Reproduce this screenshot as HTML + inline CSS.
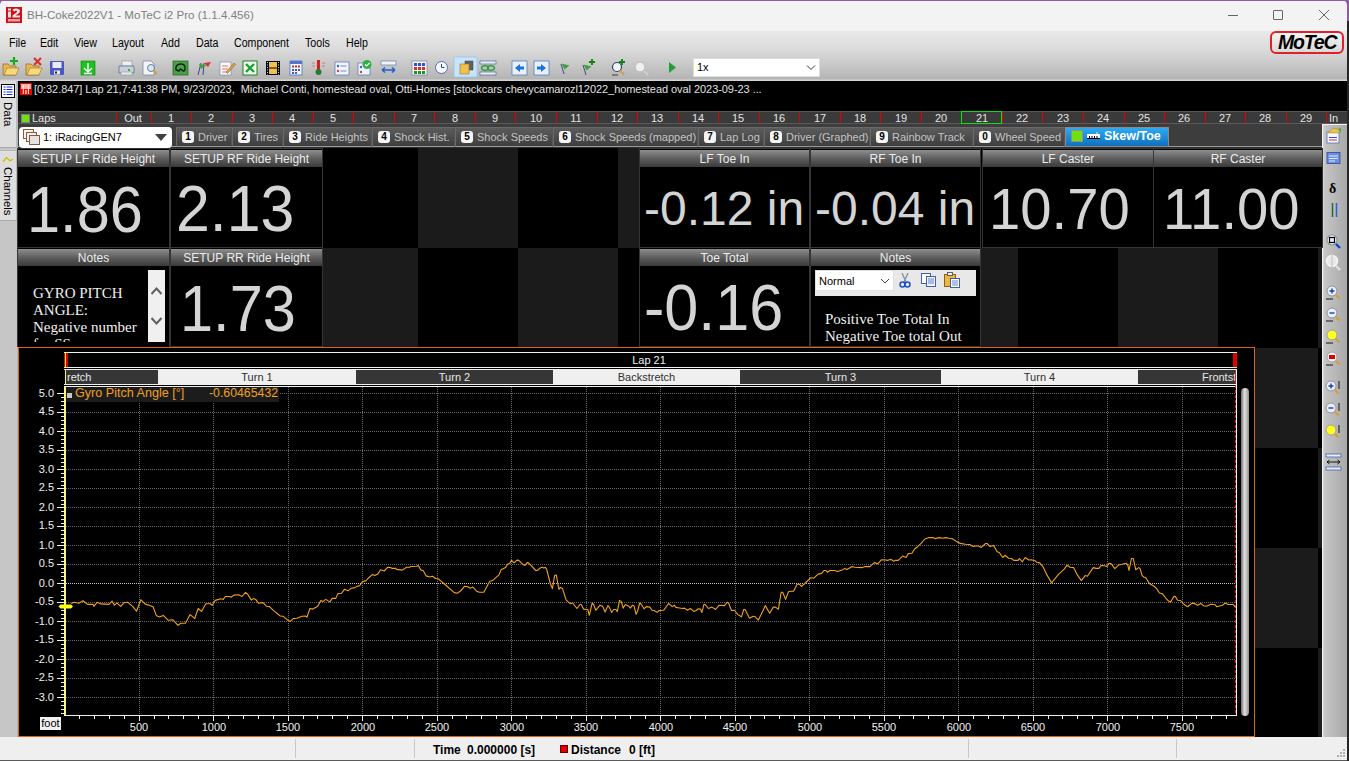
<!DOCTYPE html>
<html><head><meta charset="utf-8">
<style>
*{margin:0;padding:0;box-sizing:border-box}
html,body{width:1349px;height:761px;overflow:hidden;background:#262626;font-family:"Liberation Sans",sans-serif}
.a{position:absolute}
#win{position:absolute;left:0;top:0;width:1347px;height:761px;background:#f3f3f3;overflow:hidden;border-top-left-radius:5px;border-top-right-radius:5px}
.t{position:absolute;white-space:nowrap}
.mn{top:36px;font-size:12.5px;color:#000;transform:scaleX(0.85);transform-origin:0 0}
.lp{top:112px;font-size:11px;color:#e4e4e4;line-height:13px}
.tab{top:127px;height:20px;background:linear-gradient(#5c5c5c,#3e3e3e);border:1px solid #6a6a6a;border-right-color:#555;border-bottom-color:#999}
.badge{top:131px;width:12px;height:12px;background:#f4f4f4;color:#000;font-size:10px;font-weight:bold;line-height:12px;text-align:center;border-radius:3px}
.tabt{top:131px;font-size:11px;color:#c4c4c4}
.hd{height:17px;background:linear-gradient(#8e8e8e,#5a5a5a 55%,#3a3a3a);color:#ececec;font-size:12px;line-height:18px;text-align:center;white-space:nowrap;overflow:hidden}
.val{color:#d4d4d4;line-height:1}
.sec{top:370px;height:14px;font-size:11px;line-height:14px;overflow:hidden;white-space:nowrap}
.ylab{width:40px;text-align:right;font-size:11px;color:#f0f0f0;line-height:14px}
.xlab{width:60px;text-align:center;font-size:11px;color:#f0f0f0;line-height:14px}
</style></head><body>
<div class="a" style="left:0;top:0;width:1349px;height:761px;background:#262626"></div>
<div class="a" style="left:0;top:0;width:1349px;height:21px;background:#8e5aa0"></div>
<div id="win">
  <!-- title bar -->
  <svg class="a" style="left:6px;top:7px" width="16" height="16" viewBox="0 0 16 16">
    <rect x="0" y="0" width="16" height="16" fill="#d01018"/>
    <rect x="2" y="1.5" width="3" height="2" fill="#e8e8e8"/>
    <rect x="2" y="4.5" width="3" height="6" fill="#e0e0e0"/>
    <path d="M6.5 3.5 Q6.5 1.5 10 1.5 Q14 1.5 14 4 Q14 6 11 7.5 L9.5 8.5 H14 V10.5 H6.5 V8.5 L10.5 5.5 Q11.5 4.5 10.5 3.8 Q9 3.3 8.8 4.5 Z" fill="#e4e4e4"/>
    <rect x="2" y="12" width="12" height="2.5" fill="#f0c0c0" opacity="0.8"/>
  </svg>
  <div class="t" style="left:27px;top:8px;font-size:11.6px;color:#808080">BH-Coke2022V1 - MoTeC i2 Pro (1.1.4.456)</div>
  <div class="a" style="left:1228px;top:15px;width:10px;height:1px;background:#666"></div>
  <div class="a" style="left:1273px;top:10px;width:10px;height:10px;border:1px solid #666;border-radius:1px"></div>
  <svg class="a" style="left:1319px;top:10px" width="10" height="10" viewBox="0 0 10 10"><path d="M0 0L10 10M10 0L0 10" stroke="#666" stroke-width="1"/></svg>
  <!-- menu + toolbar gradient -->
  <div class="a" style="left:0;top:31px;width:1347px;height:50px;background:linear-gradient(#e9e9e9 0%,#dcdcdc 35%,#c6c6c6 70%,#b4b4b4 96%,#d4d4d4 98%,#d4d4d4 100%)"></div>
  <div class="t mn" style="left:9px">File</div>
  <div class="t mn" style="left:40px">Edit</div>
  <div class="t mn" style="left:74px">View</div>
  <div class="t mn" style="left:112px">Layout</div>
  <div class="t mn" style="left:161px">Add</div>
  <div class="t mn" style="left:196px">Data</div>
  <div class="t mn" style="left:234px">Component</div>
  <div class="t mn" style="left:305px">Tools</div>
  <div class="t mn" style="left:346px">Help</div>
  <!-- MoTeC logo -->
  <div class="a" style="left:1270px;top:31px;width:74px;height:23px;border:2px solid #e0202a;border-radius:6px;background:linear-gradient(#f4f4f4,#d8d8d8)"></div>
  <div class="t" style="left:1278px;top:31px;font-size:19.5px;font-weight:bold;font-style:italic;color:#000;letter-spacing:-1.2px;transform:scaleY(1.05)">MoTeC</div>
  <!-- toolbar icons -->
  <svg class="a" style="left:0;top:55px" width="700" height="26" viewBox="0 55 700 26">
    <!-- folder + -->
    <path d="M3 64 h5 l2 2 h6 v9 h-13z" fill="#e8b850" stroke="#a07030" stroke-width="0.8"/>
    <path d="M4 75 l3 -7 h12 l-3 7z" fill="#f8d878" stroke="#a07030" stroke-width="0.6"/>
    <path d="M14 57 v8 M10 61 h8" stroke="#10b010" stroke-width="2.2"/>
    <!-- folder x -->
    <path d="M26 64 h5 l2 2 h6 v9 h-13z" fill="#e8b850" stroke="#a07030" stroke-width="0.8"/>
    <path d="M27 75 l3 -7 h12 l-3 7z" fill="#f8d878" stroke="#a07030" stroke-width="0.6"/>
    <path d="M34 58 l7 7 M41 58 l-7 7" stroke="#d83030" stroke-width="2.2"/>
    <!-- floppy -->
    <rect x="50" y="61" width="14" height="14" fill="#4858c8" rx="1"/>
    <rect x="52.5" y="62" width="9" height="6" fill="#e8eef8"/>
    <rect x="54" y="70.5" width="6" height="4" fill="#e8e8e8"/>
    <rect x="55" y="71.5" width="2" height="2" fill="#222"/>
    <!-- green download -->
    <rect x="81" y="61" width="14" height="14" fill="#20c020" stroke="#108010" stroke-width="0.6"/>
    <path d="M88 63 v8 M84 68 l4 4 l4 -4 M84 73.5 h8" stroke="#fff" stroke-width="1.4" fill="none"/>
    <!-- printer -->
    <rect x="122" y="61" width="10" height="5" fill="#f0f0f0" stroke="#8090a0" stroke-width="0.6"/>
    <path d="M119 66 h15 v7 h-15z" fill="#c8d0d8" stroke="#6070a0" stroke-width="0.8"/>
    <rect x="121" y="72" width="11" height="3" fill="#e8e8e8" stroke="#8090a0" stroke-width="0.5"/>
    <rect x="128" y="69" width="2" height="2" fill="#20c020"/>
    <!-- print preview -->
    <path d="M143 61 h8 l3 3 v11 h-11z" fill="#f4f4f8" stroke="#7080a0" stroke-width="0.7"/>
    <circle cx="151" cy="68" r="3.5" fill="#d8e8f0" stroke="#6080a0" stroke-width="1"/>
    <path d="M153.5 70.5 l3.5 3.5" stroke="#d0a040" stroke-width="2"/>
    <!-- green track -->
    <rect x="173" y="61" width="15" height="14" fill="#48a048" stroke="#206020" stroke-width="0.7"/>
    <path d="M176 70 q-1 -6 5 -6 q5 0 4 6 q-1 2 -3 0 q-2 -2 -3 1 z" fill="none" stroke="#102010" stroke-width="1.4"/>
    <!-- flags -->
    <path d="M198 75 l3 -12 M203 75 l1 -12" stroke="#4040a0" stroke-width="1"/>
    <path d="M199 64 l8 1 l-6 4z" fill="#40a040"/>
    <path d="M204 63 l7 -1 l-3 5z" fill="#e03030"/>
    <!-- notepad pencil -->
    <rect x="220" y="62" width="11" height="13" fill="#f8f8f8" stroke="#8090b0" stroke-width="0.7"/>
    <path d="M222 66 h6 M222 69 h6 M222 72 h5" stroke="#e05050" stroke-width="0.8"/>
    <path d="M226 72 l8 -9 l1.5 1.5 l-8 9 z" fill="#e0a040" stroke="#805020" stroke-width="0.5"/>
    <!-- excel -->
    <rect x="243" y="61" width="14" height="14" fill="#f0f8f0" stroke="#208020" stroke-width="1"/>
    <path d="M246 64 l8 8 M254 64 l-8 8" stroke="#20a030" stroke-width="2.4"/>
    <!-- film -->
    <rect x="266" y="61" width="14" height="14" fill="#000"/>
    <rect x="269" y="62" width="8" height="5.5" fill="#f0c050"/>
    <rect x="269" y="68.5" width="8" height="5.5" fill="#f0c050"/>
    <path d="M267.5 62v13M278.5 62v13" stroke="#e0e0e0" stroke-width="1" stroke-dasharray="1 1.5"/>
    <!-- calendar -->
    <rect x="290" y="61" width="12" height="14" fill="#f0f4ff" stroke="#5070c0" stroke-width="0.8"/>
    <rect x="290" y="61" width="12" height="3" fill="#5078d0"/>
    <g fill="#d03030"><rect x="292" y="65.5" width="2" height="2"/><rect x="295" y="65.5" width="2" height="2"/><rect x="298" y="65.5" width="2" height="2"/></g>
    <g fill="#4060c0"><rect x="292" y="69" width="2" height="2"/><rect x="295" y="69" width="2" height="2"/><rect x="298" y="69" width="2" height="2"/><rect x="292" y="72" width="2" height="2"/><rect x="295" y="72" width="2" height="2"/></g>
    <!-- thermometer -->
    <rect x="317" y="60" width="3" height="10" fill="#d02020"/>
    <circle cx="318.5" cy="72" r="3" fill="#208030"/>
    <path d="M312 63 h3 M322 63 h3 M312 66 h3 M322 66 h3" stroke="#f06060" stroke-width="0.8"/>
    <!-- list -->
    <rect x="335" y="62" width="14" height="13" fill="#f0f4ff" stroke="#6080c0" stroke-width="0.8"/>
    <circle cx="338" cy="66" r="1.2" fill="#4060d0"/><circle cx="338" cy="71" r="1.2" fill="#d04040"/>
    <path d="M340.5 66 h6 M340.5 71 h6" stroke="#6070a0" stroke-width="0.8"/>
    <!-- list check -->
    <rect x="358" y="63" width="12" height="12" fill="#f0f4ff" stroke="#6080c0" stroke-width="0.8"/>
    <circle cx="361" cy="67" r="1.2" fill="#4060d0"/><circle cx="361" cy="72" r="1.2" fill="#d04040"/>
    <circle cx="367" cy="64.5" r="4.5" fill="#30b040"/>
    <path d="M365 64.5 l1.5 1.5 l3 -3" stroke="#fff" stroke-width="1.2" fill="none"/>
    <!-- ruler arrows -->
    <rect x="381" y="61" width="15" height="4" fill="#f4f4f4" stroke="#5070b0" stroke-width="0.6"/>
    <path d="M382 70 h13 M382 70 l3 -2.5 M382 70 l3 2.5 M395 70 l-3 -2.5 M395 70 l-3 2.5" stroke="#2060d0" stroke-width="1.6" fill="none"/>
    <!-- grid -->
    <rect x="412" y="61" width="15" height="14" fill="#f4f4f4" stroke="#607090" stroke-width="0.6"/>
    <g fill="#3050d0"><rect x="414" y="63" width="3" height="3"/><rect x="418" y="63" width="3" height="3"/><rect x="422" y="63" width="3" height="3"/></g>
    <g fill="#d03030"><rect x="414" y="67" width="3" height="3"/><rect x="418" y="67" width="3" height="3"/><rect x="422" y="67" width="3" height="3"/></g>
    <g fill="#209030"><rect x="414" y="71" width="3" height="3"/><rect x="418" y="71" width="3" height="3"/><rect x="422" y="71" width="3" height="3"/></g>
    <!-- clock -->
    <circle cx="441.5" cy="67.5" r="6" fill="#f4f8ff" stroke="#5070b0" stroke-width="1"/>
    <path d="M441.5 64 v3.5 h3" stroke="#304080" stroke-width="1" fill="none"/>
    <!-- selected squares -->
    <rect x="454" y="57" width="23" height="20" fill="#c8e4fa" stroke="#90c8f0" stroke-width="0.8" rx="1"/>
    <rect x="465" y="61" width="8" height="9" fill="#606060" stroke="#404040" stroke-width="0.5"/>
    <rect x="460" y="64" width="9" height="10" fill="#f0c050" stroke="#a07020" stroke-width="0.6"/>
    <!-- ruler link -->
    <rect x="480" y="61" width="16" height="3" fill="#e8f0f8" stroke="#405080" stroke-width="0.6"/>
    <rect x="480" y="72" width="16" height="3" fill="#e8f0f8" stroke="#405080" stroke-width="0.6"/>
    <ellipse cx="485" cy="68" rx="3.5" ry="2.2" fill="none" stroke="#30a040" stroke-width="1.4"/>
    <ellipse cx="491" cy="68" rx="3.5" ry="2.2" fill="none" stroke="#30a040" stroke-width="1.4"/>
    <!-- arrow left -->
    <rect x="512" y="61" width="15" height="14" fill="#e8f0fc" stroke="#5080c0" stroke-width="0.8"/>
    <path d="M515 68 l5 -4 v2.5 h4 v3 h-4 v2.5z" fill="#2070e0"/>
    <!-- arrow right -->
    <rect x="534" y="61" width="15" height="14" fill="#e8f0fc" stroke="#5080c0" stroke-width="0.8"/>
    <path d="M546 68 l-5 -4 v2.5 h-4 v3 h4 v2.5z" fill="#2070e0"/>
    <!-- flag -->
    <path d="M561 64 l3 10" stroke="#304080" stroke-width="0.9"/>
    <path d="M561.5 63.5 l8 2 l-5 4z" fill="#40a040"/>
    <!-- flag+ -->
    <path d="M583 65 l3 10" stroke="#304080" stroke-width="0.9"/>
    <path d="M583.5 64.5 l8 2 l-5 4z" fill="#40a040"/>
    <path d="M592 59 v6 M589 62 h6" stroke="#108010" stroke-width="1.8"/>
    <!-- zoom+ -->
    <circle cx="617" cy="67" r="4.5" fill="#f0f4f8" stroke="#304060" stroke-width="1.2"/>
    <path d="M620 70.5 l4 4" stroke="#d0a040" stroke-width="2.2"/>
    <path d="M622 59 v6 M619 62 h6" stroke="#108010" stroke-width="1.8"/>
    <path d="M612 75 h6" stroke="#202020" stroke-width="0.8"/>
    <!-- zoom gray -->
    <circle cx="640" cy="67" r="5" fill="#f0f0f0" stroke="#c0c0c0" stroke-width="1.4"/>
    <path d="M644 71 l4 4" stroke="#d0d0d0" stroke-width="2.2"/>
    <!-- play -->
    <path d="M669 62 l7 5.5 l-7 5.5z" fill="#20a030"/>
  </svg>
  <!-- 1x combo -->
  <div class="a" style="left:693px;top:58px;width:127px;height:19px;background:#fff;border:1px solid #dcdcdc"></div>
  <div class="t" style="left:697px;top:61px;font-size:11px;color:#000">1x</div>
  <svg class="a" style="left:806px;top:64px" width="10" height="7" viewBox="0 0 10 7"><path d="M1 1.5l4 4l4 -4" stroke="#333" stroke-width="1" fill="none"/></svg>

  <div class="a" style="left:18px;top:81px;width:1329px;height:30px;background:#000"></div>
  <svg class="a" style="left:20px;top:83px" width="12" height="12" viewBox="0 0 12 12">
    <rect width="12" height="12" fill="#f00000"/>
    <rect x="1" y="1" width="10" height="5" fill="#f4b0b0"/>
    <path d="M3.3 2v9M8.4 2v9" stroke="#fff0d0" stroke-width="1"/>
    <path d="M5.5 7v4M6.3 7v4" stroke="#ffe0c0" stroke-width="0.8"/>
  </svg>
  <div class="t" style="left:34px;top:83px;font-size:11px;color:#e0e0e0;letter-spacing:-0.06px">[0:32.847] Lap 21,7:41:38 PM, 9/23/2023,&nbsp; Michael Conti, homestead oval, Otti-Homes [stockcars chevycamarozl12022_homestead oval 2023-09-23 ...</div>


  <div class="a" style="left:0;top:81px;width:18px;height:656px;background:#c6c6c6"></div>
  <div class="a" style="left:17px;top:81px;width:1px;height:656px;background:#b4b4b4"></div>
  <div class="a" style="left:0;top:81px;width:17px;height:67px;background:#dedede;border-bottom:1px solid #aaa;border-right:1px solid #bbb"></div>
  <svg class="a" style="left:1px;top:84px" width="14" height="14" viewBox="0 0 14 14">
    <rect x="0.5" y="0.5" width="13" height="13" fill="#fff" stroke="#000" stroke-width="1"/>
    <path d="M2.5 3h2M5.5 3h6M2.5 5.5h2M5.5 5.5h6M2.5 8h2M5.5 8h6M2.5 10.5h2M5.5 10.5h6" stroke="#1030e0" stroke-width="1.2"/>
  </svg>
  <div class="t" style="left:2px;top:102px;font-size:11.5px;color:#000;writing-mode:vertical-rl">Data</div>
  <div class="a" style="left:0;top:150px;width:17px;height:71px;background:#dedede;border-bottom:1px solid #aaa;border-top:1px solid #bbb;border-right:1px solid #bbb"></div>
  <svg class="a" style="left:2px;top:155px" width="12" height="9" viewBox="0 0 12 9"><path d="M1 7 L4.5 2.5 L8 6 L11 4" stroke="#d0c000" stroke-width="1.3" fill="none"/></svg>
  <div class="t" style="left:2px;top:167px;font-size:11.5px;color:#000;writing-mode:vertical-rl">Channels</div>

<div class="a" style="left:18px;top:111px;width:1329px;height:13px;background:#3a3a3a;border-top:1px solid #555;border-bottom:1px solid #5a5a5a"></div>
<div class="a" style="left:21px;top:114px;width:9px;height:9px;background:#70e010;border:1px solid #808080"></div>
<div class="t lp" style="left:32px">Laps</div>
<div class="a" style="left:116px;top:112px;width:1px;height:11px;background:#e00000"></div>
<div class="a" style="left:151px;top:112px;width:1px;height:11px;background:#e00000"></div>
<div class="a" style="left:191px;top:112px;width:1px;height:11px;background:#e00000"></div>
<div class="a" style="left:232px;top:112px;width:1px;height:11px;background:#e00000"></div>
<div class="a" style="left:272px;top:112px;width:1px;height:11px;background:#e00000"></div>
<div class="a" style="left:313px;top:112px;width:1px;height:11px;background:#e00000"></div>
<div class="a" style="left:353px;top:112px;width:1px;height:11px;background:#e00000"></div>
<div class="a" style="left:394px;top:112px;width:1px;height:11px;background:#e00000"></div>
<div class="a" style="left:434px;top:112px;width:1px;height:11px;background:#e00000"></div>
<div class="a" style="left:475px;top:112px;width:1px;height:11px;background:#e00000"></div>
<div class="a" style="left:515px;top:112px;width:1px;height:11px;background:#e00000"></div>
<div class="a" style="left:556px;top:112px;width:1px;height:11px;background:#e00000"></div>
<div class="a" style="left:597px;top:112px;width:1px;height:11px;background:#e00000"></div>
<div class="a" style="left:637px;top:112px;width:1px;height:11px;background:#e00000"></div>
<div class="a" style="left:678px;top:112px;width:1px;height:11px;background:#e00000"></div>
<div class="a" style="left:718px;top:112px;width:1px;height:11px;background:#e00000"></div>
<div class="a" style="left:759px;top:112px;width:1px;height:11px;background:#e00000"></div>
<div class="a" style="left:799px;top:112px;width:1px;height:11px;background:#e00000"></div>
<div class="a" style="left:840px;top:112px;width:1px;height:11px;background:#e00000"></div>
<div class="a" style="left:880px;top:112px;width:1px;height:11px;background:#e00000"></div>
<div class="a" style="left:921px;top:112px;width:1px;height:11px;background:#e00000"></div>
<div class="a" style="left:961px;top:112px;width:1px;height:11px;background:#e00000"></div>
<div class="a" style="left:1002px;top:112px;width:1px;height:11px;background:#e00000"></div>
<div class="a" style="left:1042px;top:112px;width:1px;height:11px;background:#e00000"></div>
<div class="a" style="left:1083px;top:112px;width:1px;height:11px;background:#e00000"></div>
<div class="a" style="left:1124px;top:112px;width:1px;height:11px;background:#e00000"></div>
<div class="a" style="left:1164px;top:112px;width:1px;height:11px;background:#e00000"></div>
<div class="a" style="left:1205px;top:112px;width:1px;height:11px;background:#e00000"></div>
<div class="a" style="left:1245px;top:112px;width:1px;height:11px;background:#e00000"></div>
<div class="a" style="left:1286px;top:112px;width:1px;height:11px;background:#e00000"></div>
<div class="a" style="left:1326px;top:112px;width:1px;height:11px;background:#e00000"></div>
<div class="t lp" style="left:103px;width:60px;text-align:center">Out</div>
<div class="t lp" style="left:141px;width:60px;text-align:center">1</div>
<div class="t lp" style="left:181px;width:60px;text-align:center">2</div>
<div class="t lp" style="left:222px;width:60px;text-align:center">3</div>
<div class="t lp" style="left:262px;width:60px;text-align:center">4</div>
<div class="t lp" style="left:303px;width:60px;text-align:center">5</div>
<div class="t lp" style="left:344px;width:60px;text-align:center">6</div>
<div class="t lp" style="left:384px;width:60px;text-align:center">7</div>
<div class="t lp" style="left:425px;width:60px;text-align:center">8</div>
<div class="t lp" style="left:465px;width:60px;text-align:center">9</div>
<div class="t lp" style="left:506px;width:60px;text-align:center">10</div>
<div class="t lp" style="left:546px;width:60px;text-align:center">11</div>
<div class="t lp" style="left:587px;width:60px;text-align:center">12</div>
<div class="t lp" style="left:627px;width:60px;text-align:center">13</div>
<div class="t lp" style="left:668px;width:60px;text-align:center">14</div>
<div class="t lp" style="left:708px;width:60px;text-align:center">15</div>
<div class="t lp" style="left:749px;width:60px;text-align:center">16</div>
<div class="t lp" style="left:790px;width:60px;text-align:center">17</div>
<div class="t lp" style="left:830px;width:60px;text-align:center">18</div>
<div class="t lp" style="left:871px;width:60px;text-align:center">19</div>
<div class="t lp" style="left:911px;width:60px;text-align:center">20</div>
<div class="t lp" style="left:952px;width:60px;text-align:center">21</div>
<div class="t lp" style="left:992px;width:60px;text-align:center">22</div>
<div class="t lp" style="left:1033px;width:60px;text-align:center">23</div>
<div class="t lp" style="left:1073px;width:60px;text-align:center">24</div>
<div class="t lp" style="left:1114px;width:60px;text-align:center">25</div>
<div class="t lp" style="left:1154px;width:60px;text-align:center">26</div>
<div class="t lp" style="left:1195px;width:60px;text-align:center">27</div>
<div class="t lp" style="left:1235px;width:60px;text-align:center">28</div>
<div class="t lp" style="left:1276px;width:60px;text-align:center">29</div>
<div class="t lp" style="left:1329px">In</div>
<div class="a" style="left:961px;top:111px;width:41px;height:13px;border:1px solid #10e010"></div>
<div class="a" style="left:18px;top:124px;width:1304px;height:26px;background:#3d3d3d"></div>
<div class="a" style="left:18px;top:146px;width:1304px;height:1px;background:#9a9a9a"></div>
<div class="a" style="left:18px;top:147px;width:1304px;height:3px;background:#2e2e2e"></div>
<div class="a" style="left:19px;top:127px;width:153px;height:21px;background:#fff;border-radius:4px"></div>
  <svg class="a" style="left:23px;top:129px" width="18" height="17" viewBox="0 0 18 17">
    <rect x="0.5" y="0.5" width="10" height="9" fill="#f4f4f4" stroke="#8b5a3a"/>
    <rect x="3.5" y="3.5" width="10" height="9" fill="#f0f0f0" stroke="#8b5a3a"/>
    <rect x="6.5" y="6.5" width="10" height="9" fill="#e4e4e4" stroke="#8b5a3a"/>
  </svg>
  <div class="t" style="left:43px;top:131px;font-size:11px;color:#000">1: iRacingGEN7</div>
  <svg class="a" style="left:155px;top:134px" width="12" height="7" viewBox="0 0 12 7"><path d="M0 0h12l-6 7z" fill="#404040"/></svg>

<div class="a tab" style="left:176px;width:56px"></div>
<div class="a badge" style="left:182px">1</div>
<div class="t tabt" style="left:198px">Driver</div>
<div class="a tab" style="left:232px;width:51px"></div>
<div class="a badge" style="left:238px">2</div>
<div class="t tabt" style="left:254px">Tires</div>
<div class="a tab" style="left:283px;width:89px"></div>
<div class="a badge" style="left:289px">3</div>
<div class="t tabt" style="left:305px">Ride Heights</div>
<div class="a tab" style="left:372px;width:83px"></div>
<div class="a badge" style="left:378px">4</div>
<div class="t tabt" style="left:394px">Shock Hist.</div>
<div class="a tab" style="left:455px;width:98px"></div>
<div class="a badge" style="left:461px">5</div>
<div class="t tabt" style="left:477px">Shock Speeds</div>
<div class="a tab" style="left:553px;width:145px"></div>
<div class="a badge" style="left:559px">6</div>
<div class="t tabt" style="left:575px">Shock Speeds (mapped)</div>
<div class="a tab" style="left:698px;width:66px"></div>
<div class="a badge" style="left:704px">7</div>
<div class="t tabt" style="left:720px">Lap Log</div>
<div class="a tab" style="left:764px;width:106px"></div>
<div class="a badge" style="left:770px">8</div>
<div class="t tabt" style="left:786px">Driver (Graphed)</div>
<div class="a tab" style="left:870px;width:103px"></div>
<div class="a badge" style="left:876px">9</div>
<div class="t tabt" style="left:892px">Rainbow Track</div>
<div class="a tab" style="left:973px;width:92px"></div>
<div class="a badge" style="left:979px">0</div>
<div class="t tabt" style="left:995px">Wheel Speed</div>
<div class="a" style="left:1065px;top:127px;width:104px;height:20px;background:linear-gradient(#2eaaf0,#1a88d8 60%,#1070b8);border:1px solid #8a8a8a"></div>
  <div class="a" style="left:1071px;top:130px;width:12px;height:12px;background:#70e010;border:1px solid #909090"></div>
  <svg class="a" style="left:1087px;top:132px" width="13" height="7" viewBox="0 0 13 7"><rect x="0" y="2" width="13" height="5" fill="#f8f8f8"/><path d="M0 6.5h13" stroke="#000" stroke-width="1"/><path d="M2.5 4v2.5M5 4v2.5M7.5 4v2.5M10 4v2.5" stroke="#000" stroke-width="1"/><circle cx="10" cy="1" r="0.8" fill="#fff"/></svg>
  <div class="t" style="left:1104px;top:129px;font-size:12.5px;font-weight:bold;color:#fff">Skew/Toe</div>

<div class="a" style="left:18px;top:148px;width:1304px;height:589px;background:#000;overflow:hidden">
<div class="a" style="left:0px;top:0px;width:100px;height:100px;background:#1b1b1b"></div>
<div class="a" style="left:200px;top:0px;width:100px;height:100px;background:#1b1b1b"></div>
<div class="a" style="left:400px;top:0px;width:100px;height:100px;background:#1b1b1b"></div>
<div class="a" style="left:600px;top:0px;width:100px;height:100px;background:#1b1b1b"></div>
<div class="a" style="left:800px;top:0px;width:100px;height:100px;background:#1b1b1b"></div>
<div class="a" style="left:1000px;top:0px;width:100px;height:100px;background:#1b1b1b"></div>
<div class="a" style="left:1200px;top:0px;width:100px;height:100px;background:#1b1b1b"></div>
<div class="a" style="left:100px;top:100px;width:100px;height:100px;background:#1b1b1b"></div>
<div class="a" style="left:300px;top:100px;width:100px;height:100px;background:#1b1b1b"></div>
<div class="a" style="left:500px;top:100px;width:100px;height:100px;background:#1b1b1b"></div>
<div class="a" style="left:700px;top:100px;width:100px;height:100px;background:#1b1b1b"></div>
<div class="a" style="left:900px;top:100px;width:100px;height:100px;background:#1b1b1b"></div>
<div class="a" style="left:1100px;top:100px;width:100px;height:100px;background:#1b1b1b"></div>
<div class="a" style="left:1300px;top:100px;width:100px;height:100px;background:#1b1b1b"></div>
<div class="a" style="left:0px;top:200px;width:100px;height:100px;background:#1b1b1b"></div>
<div class="a" style="left:200px;top:200px;width:100px;height:100px;background:#1b1b1b"></div>
<div class="a" style="left:400px;top:200px;width:100px;height:100px;background:#1b1b1b"></div>
<div class="a" style="left:600px;top:200px;width:100px;height:100px;background:#1b1b1b"></div>
<div class="a" style="left:800px;top:200px;width:100px;height:100px;background:#1b1b1b"></div>
<div class="a" style="left:1000px;top:200px;width:100px;height:100px;background:#1b1b1b"></div>
<div class="a" style="left:1200px;top:200px;width:100px;height:100px;background:#1b1b1b"></div>
<div class="a" style="left:100px;top:300px;width:100px;height:100px;background:#1b1b1b"></div>
<div class="a" style="left:300px;top:300px;width:100px;height:100px;background:#1b1b1b"></div>
<div class="a" style="left:500px;top:300px;width:100px;height:100px;background:#1b1b1b"></div>
<div class="a" style="left:700px;top:300px;width:100px;height:100px;background:#1b1b1b"></div>
<div class="a" style="left:900px;top:300px;width:100px;height:100px;background:#1b1b1b"></div>
<div class="a" style="left:1100px;top:300px;width:100px;height:100px;background:#1b1b1b"></div>
<div class="a" style="left:1300px;top:300px;width:100px;height:100px;background:#1b1b1b"></div>
<div class="a" style="left:0px;top:400px;width:100px;height:100px;background:#1b1b1b"></div>
<div class="a" style="left:200px;top:400px;width:100px;height:100px;background:#1b1b1b"></div>
<div class="a" style="left:400px;top:400px;width:100px;height:100px;background:#1b1b1b"></div>
<div class="a" style="left:600px;top:400px;width:100px;height:100px;background:#1b1b1b"></div>
<div class="a" style="left:800px;top:400px;width:100px;height:100px;background:#1b1b1b"></div>
<div class="a" style="left:1000px;top:400px;width:100px;height:100px;background:#1b1b1b"></div>
<div class="a" style="left:1200px;top:400px;width:100px;height:100px;background:#1b1b1b"></div>
<div class="a" style="left:100px;top:500px;width:100px;height:100px;background:#1b1b1b"></div>
<div class="a" style="left:300px;top:500px;width:100px;height:100px;background:#1b1b1b"></div>
<div class="a" style="left:500px;top:500px;width:100px;height:100px;background:#1b1b1b"></div>
<div class="a" style="left:700px;top:500px;width:100px;height:100px;background:#1b1b1b"></div>
<div class="a" style="left:900px;top:500px;width:100px;height:100px;background:#1b1b1b"></div>
<div class="a" style="left:1100px;top:500px;width:100px;height:100px;background:#1b1b1b"></div>
<div class="a" style="left:1300px;top:500px;width:100px;height:100px;background:#1b1b1b"></div>
</div>
<div class="a" style="left:17px;top:148px;width:153px;height:100px;background:#000;border:1px solid #353535"></div>
<div class="a hd" style="left:18px;top:150px;width:151px"><span>SETUP LF Ride Height</span></div>
<div class="a" style="left:170px;top:148px;width:153px;height:100px;background:#000;border:1px solid #353535"></div>
<div class="a hd" style="left:171px;top:150px;width:151px"><span>SETUP RF Ride Height</span></div>
<div class="a" style="left:639px;top:148px;width:171px;height:100px;background:#000;border:1px solid #353535"></div>
<div class="a hd" style="left:640px;top:150px;width:169px"><span>LF Toe In</span></div>
<div class="a" style="left:810px;top:148px;width:171px;height:100px;background:#000;border:1px solid #353535"></div>
<div class="a hd" style="left:811px;top:150px;width:169px"><span>RF Toe In</span></div>
<div class="a" style="left:982px;top:148px;width:172px;height:100px;background:#000;border:1px solid #353535"></div>
<div class="a hd" style="left:983px;top:150px;width:170px"><span>LF Caster</span></div>
<div class="a" style="left:1153px;top:148px;width:170px;height:100px;background:#000;border:1px solid #353535"></div>
<div class="a hd" style="left:1154px;top:150px;width:168px"><span>RF Caster</span></div>
<div class="a" style="left:17px;top:247px;width:153px;height:100px;background:#000;border:1px solid #353535"></div>
<div class="a hd" style="left:18px;top:249px;width:151px"><span>Notes</span></div>
<div class="a" style="left:170px;top:247px;width:153px;height:100px;background:#000;border:1px solid #353535"></div>
<div class="a hd" style="left:171px;top:249px;width:151px"><span>SETUP RR Ride Height</span></div>
<div class="a" style="left:639px;top:247px;width:171px;height:100px;background:#000;border:1px solid #353535"></div>
<div class="a hd" style="left:640px;top:249px;width:169px"><span>Toe Total</span></div>
<div class="a" style="left:810px;top:247px;width:171px;height:100px;background:#000;border:1px solid #353535"></div>
<div class="a hd" style="left:811px;top:249px;width:169px"><span>Notes</span></div>
<div class="a" style="left:169px;top:148px;width:2px;height:199px;background:#353535"></div>
<div class="a" style="left:809px;top:148px;width:2px;height:199px;background:#353535"></div>
<div class="a" style="left:1153px;top:148px;width:1px;height:100px;background:#353535"></div>
<div class="t val" style="left:27px;top:178px;font-size:64px;transform:scaleX(0.930);transform-origin:0 0">1.86</div>
<div class="t val" style="left:176px;top:177px;font-size:64px;transform:scaleX(0.950);transform-origin:0 0">2.13</div>
<div class="t val" style="left:644px;top:185px;font-size:48px;transform:scaleX(1.000);transform-origin:0 0">-0.12 in</div>
<div class="t val" style="left:815px;top:185px;font-size:48px;transform:scaleX(1.000);transform-origin:0 0">-0.04 in</div>
<div class="t val" style="left:989px;top:180px;font-size:58px;transform:scaleX(0.970);transform-origin:0 0">10.70</div>
<div class="t val" style="left:1163px;top:180px;font-size:58px;transform:scaleX(0.970);transform-origin:0 0">11.00</div>
<div class="t val" style="left:180px;top:277px;font-size:64px;transform:scaleX(0.930);transform-origin:0 0">1.73</div>
<div class="t val" style="left:644px;top:276px;font-size:64px;transform:scaleX(0.955);transform-origin:0 0">-0.16</div>
<div class="a" style="left:18px;top:266px;width:151px;height:81px;overflow:hidden">
  <div class="t" style="left:15px;top:19px;font-family:'Liberation Serif',serif;font-size:15px;line-height:17px;color:#f0f0f0;white-space:normal;width:120px">GYRO PITCH<br>ANGLE:<br>Negative number<br>for SS</div>
  </div>
  <div class="a" style="left:18px;top:342px;width:151px;height:5px;background:#000"></div>
  <div class="a" style="left:148px;top:270px;width:17px;height:72px;background:#f0f0f0"></div>
  <svg class="a" style="left:150px;top:286px" width="13" height="42" viewBox="0 0 13 42">
    <path d="M1.5 8l5 -5.5l5 5.5" stroke="#606060" stroke-width="2" fill="none"/>
    <path d="M1.5 32l5 5.5l5 -5.5" stroke="#606060" stroke-width="2" fill="none"/>
  </svg>

<div class="a" style="left:815px;top:270px;width:161px;height:26px;background:#e8e8e8"></div>
  <div class="a" style="left:815px;top:270px;width:79px;height:21px;background:#fff;border:1px solid #e0e0e0"></div>
  <div class="t" style="left:819px;top:275px;font-size:11px;color:#000">Normal</div>
  <svg class="a" style="left:880px;top:278px" width="10" height="6" viewBox="0 0 10 6"><path d="M1 1l4 4l4 -4" stroke="#444" stroke-width="1" fill="none"/></svg>
  <svg class="a" style="left:899px;top:273px" width="12" height="15" viewBox="0 0 12 15">
    <path d="M3 0l4 9M9 0l-4 9" stroke="#8090a0" stroke-width="1.3"/>
    <circle cx="3.5" cy="11.5" r="2.5" fill="none" stroke="#2050c0" stroke-width="1.5"/>
    <circle cx="8.5" cy="11.5" r="2.5" fill="none" stroke="#2050c0" stroke-width="1.5"/>
  </svg>
  <svg class="a" style="left:921px;top:273px" width="16" height="14" viewBox="0 0 16 14">
    <rect x="0.5" y="0.5" width="9" height="10" fill="#fff" stroke="#4060a0"/>
    <rect x="5.5" y="3.5" width="9" height="10" fill="#f0f4ff" stroke="#4060a0"/>
    <path d="M7 6h6M7 8h6M7 10h6" stroke="#4060c0" stroke-width="0.8"/>
  </svg>
  <svg class="a" style="left:944px;top:272px" width="17" height="16" viewBox="0 0 17 16">
    <rect x="0.5" y="2.5" width="11" height="12" fill="#e8b848" stroke="#906020"/>
    <rect x="3.5" y="0.5" width="5" height="3" fill="#f0f0f0" stroke="#606060"/>
    <rect x="6.5" y="6.5" width="9" height="9" fill="#fff" stroke="#4060a0"/>
    <path d="M8 9h6M8 11h6M8 13h6" stroke="#4060c0" stroke-width="0.8"/>
  </svg>
  <div class="a" style="left:811px;top:296px;width:169px;height:51px;overflow:hidden">
    <div class="t" style="left:14px;top:15px;font-family:'Liberation Serif',serif;font-size:15px;line-height:17px;color:#f0f0f0">Positive Toe Total In<br>Negative Toe total Out</div>
  </div>
<div class="a" style="left:18px;top:347px;width:1237px;height:390px;background:#000;border:1px solid #e0601a"></div>
<div class="a" style="left:64px;top:352px;width:1173px;height:16px;border-top:1px solid #f0f0f0;border-bottom:1px solid #f0f0f0;background:#000"></div>
<div class="t" style="left:599px;top:354px;width:100px;text-align:center;font-size:11px;color:#f0f0f0">Lap 21</div>
<div class="a" style="left:64px;top:353px;width:4px;height:14px;background:#e00000"></div>
<div class="a" style="left:65px;top:353px;width:1px;height:14px;background:#ffff00"></div>
<div class="a" style="left:1233px;top:353px;width:4px;height:14px;background:#e00000"></div>
<div class="a" style="left:64px;top:369px;width:1173px;height:16px;border-top:1px solid #f0f0f0;border-bottom:1px solid #f0f0f0;background:#000"></div>
<div class="a sec" style="left:65px;width:93px;background:#363636;color:#e8e8e8;text-align:left;text-indent:2px">retch</div>
<div class="a sec" style="left:158px;width:198px;background:#efefef;color:#303030;text-align:center">Turn 1</div>
<div class="a sec" style="left:356px;width:197px;background:#363636;color:#e8e8e8;text-align:center">Turn 2</div>
<div class="a sec" style="left:553px;width:187px;background:#efefef;color:#303030;text-align:center">Backstretch</div>
<div class="a sec" style="left:740px;width:201px;background:#363636;color:#e8e8e8;text-align:center">Turn 3</div>
<div class="a sec" style="left:941px;width:197px;background:#efefef;color:#303030;text-align:center">Turn 4</div>
<div class="a sec" style="left:1138px;width:98px;background:#363636;color:#e8e8e8;text-align:right;padding-right:0px;direction:ltr"><span style="position:absolute;left:64px">Frontst</span></div>
<div class="a" style="left:65px;top:370px;width:1px;height:14px;background:#ffff00"></div>
<svg class="a" style="left:0;top:0" width="1349" height="761" viewBox="0 0 1349 761">
<line x1="64" y1="386.5" x2="1237" y2="386.5" stroke="#f0f0f0" stroke-width="1"/>
<line x1="66" y1="393.5" x2="1236" y2="393.5" stroke="#6a6a6a" stroke-width="1" stroke-dasharray="1 1"/>
<line x1="66" y1="412.5" x2="1236" y2="412.5" stroke="#6a6a6a" stroke-width="1" stroke-dasharray="1 1"/>
<line x1="66" y1="431.5" x2="1236" y2="431.5" stroke="#6a6a6a" stroke-width="1" stroke-dasharray="1 1"/>
<line x1="66" y1="450.5" x2="1236" y2="450.5" stroke="#6a6a6a" stroke-width="1" stroke-dasharray="1 1"/>
<line x1="66" y1="469.5" x2="1236" y2="469.5" stroke="#6a6a6a" stroke-width="1" stroke-dasharray="1 1"/>
<line x1="66" y1="488.5" x2="1236" y2="488.5" stroke="#6a6a6a" stroke-width="1" stroke-dasharray="1 1"/>
<line x1="66" y1="507.5" x2="1236" y2="507.5" stroke="#6a6a6a" stroke-width="1" stroke-dasharray="1 1"/>
<line x1="66" y1="526.5" x2="1236" y2="526.5" stroke="#6a6a6a" stroke-width="1" stroke-dasharray="1 1"/>
<line x1="66" y1="545.5" x2="1236" y2="545.5" stroke="#6a6a6a" stroke-width="1" stroke-dasharray="1 1"/>
<line x1="66" y1="564.5" x2="1236" y2="564.5" stroke="#6a6a6a" stroke-width="1" stroke-dasharray="1 1"/>
<line x1="66" y1="583.5" x2="1236" y2="583.5" stroke="#c0c0c0" stroke-width="1" stroke-dasharray="1 1"/>
<line x1="66" y1="602.5" x2="1236" y2="602.5" stroke="#6a6a6a" stroke-width="1" stroke-dasharray="1 1"/>
<line x1="66" y1="621.5" x2="1236" y2="621.5" stroke="#6a6a6a" stroke-width="1" stroke-dasharray="1 1"/>
<line x1="66" y1="640.5" x2="1236" y2="640.5" stroke="#6a6a6a" stroke-width="1" stroke-dasharray="1 1"/>
<line x1="66" y1="659.5" x2="1236" y2="659.5" stroke="#6a6a6a" stroke-width="1" stroke-dasharray="1 1"/>
<line x1="66" y1="678.5" x2="1236" y2="678.5" stroke="#6a6a6a" stroke-width="1" stroke-dasharray="1 1"/>
<line x1="66" y1="697.5" x2="1236" y2="697.5" stroke="#6a6a6a" stroke-width="1" stroke-dasharray="1 1"/>
<line x1="139.5" y1="387" x2="139.5" y2="715" stroke="#6a6a6a" stroke-width="1" stroke-dasharray="1 1"/>
<line x1="213.5" y1="387" x2="213.5" y2="715" stroke="#6a6a6a" stroke-width="1" stroke-dasharray="1 1"/>
<line x1="288.5" y1="387" x2="288.5" y2="715" stroke="#6a6a6a" stroke-width="1" stroke-dasharray="1 1"/>
<line x1="362.5" y1="387" x2="362.5" y2="715" stroke="#6a6a6a" stroke-width="1" stroke-dasharray="1 1"/>
<line x1="437.5" y1="387" x2="437.5" y2="715" stroke="#6a6a6a" stroke-width="1" stroke-dasharray="1 1"/>
<line x1="511.5" y1="387" x2="511.5" y2="715" stroke="#6a6a6a" stroke-width="1" stroke-dasharray="1 1"/>
<line x1="586.5" y1="387" x2="586.5" y2="715" stroke="#6a6a6a" stroke-width="1" stroke-dasharray="1 1"/>
<line x1="660.5" y1="387" x2="660.5" y2="715" stroke="#6a6a6a" stroke-width="1" stroke-dasharray="1 1"/>
<line x1="735.5" y1="387" x2="735.5" y2="715" stroke="#6a6a6a" stroke-width="1" stroke-dasharray="1 1"/>
<line x1="809.5" y1="387" x2="809.5" y2="715" stroke="#6a6a6a" stroke-width="1" stroke-dasharray="1 1"/>
<line x1="884.5" y1="387" x2="884.5" y2="715" stroke="#6a6a6a" stroke-width="1" stroke-dasharray="1 1"/>
<line x1="958.5" y1="387" x2="958.5" y2="715" stroke="#6a6a6a" stroke-width="1" stroke-dasharray="1 1"/>
<line x1="1033.5" y1="387" x2="1033.5" y2="715" stroke="#6a6a6a" stroke-width="1" stroke-dasharray="1 1"/>
<line x1="1107.5" y1="387" x2="1107.5" y2="715" stroke="#6a6a6a" stroke-width="1" stroke-dasharray="1 1"/>
<line x1="1182.5" y1="387" x2="1182.5" y2="715" stroke="#6a6a6a" stroke-width="1" stroke-dasharray="1 1"/>
<line x1="57" y1="393.5" x2="65" y2="393.5" stroke="#f0f0f0" stroke-width="1"/>
<line x1="61" y1="397.5" x2="65" y2="397.5" stroke="#f0f0f0" stroke-width="1"/>
<line x1="61" y1="401.5" x2="65" y2="401.5" stroke="#f0f0f0" stroke-width="1"/>
<line x1="61" y1="405.5" x2="65" y2="405.5" stroke="#f0f0f0" stroke-width="1"/>
<line x1="61" y1="409.5" x2="65" y2="409.5" stroke="#f0f0f0" stroke-width="1"/>
<line x1="57" y1="412.5" x2="65" y2="412.5" stroke="#f0f0f0" stroke-width="1"/>
<line x1="61" y1="416.5" x2="65" y2="416.5" stroke="#f0f0f0" stroke-width="1"/>
<line x1="61" y1="420.5" x2="65" y2="420.5" stroke="#f0f0f0" stroke-width="1"/>
<line x1="61" y1="424.5" x2="65" y2="424.5" stroke="#f0f0f0" stroke-width="1"/>
<line x1="61" y1="428.5" x2="65" y2="428.5" stroke="#f0f0f0" stroke-width="1"/>
<line x1="57" y1="431.5" x2="65" y2="431.5" stroke="#f0f0f0" stroke-width="1"/>
<line x1="61" y1="435.5" x2="65" y2="435.5" stroke="#f0f0f0" stroke-width="1"/>
<line x1="61" y1="439.5" x2="65" y2="439.5" stroke="#f0f0f0" stroke-width="1"/>
<line x1="61" y1="443.5" x2="65" y2="443.5" stroke="#f0f0f0" stroke-width="1"/>
<line x1="61" y1="447.5" x2="65" y2="447.5" stroke="#f0f0f0" stroke-width="1"/>
<line x1="57" y1="450.5" x2="65" y2="450.5" stroke="#f0f0f0" stroke-width="1"/>
<line x1="61" y1="454.5" x2="65" y2="454.5" stroke="#f0f0f0" stroke-width="1"/>
<line x1="61" y1="458.5" x2="65" y2="458.5" stroke="#f0f0f0" stroke-width="1"/>
<line x1="61" y1="462.5" x2="65" y2="462.5" stroke="#f0f0f0" stroke-width="1"/>
<line x1="61" y1="466.5" x2="65" y2="466.5" stroke="#f0f0f0" stroke-width="1"/>
<line x1="57" y1="469.5" x2="65" y2="469.5" stroke="#f0f0f0" stroke-width="1"/>
<line x1="61" y1="473.5" x2="65" y2="473.5" stroke="#f0f0f0" stroke-width="1"/>
<line x1="61" y1="477.5" x2="65" y2="477.5" stroke="#f0f0f0" stroke-width="1"/>
<line x1="61" y1="481.5" x2="65" y2="481.5" stroke="#f0f0f0" stroke-width="1"/>
<line x1="61" y1="485.5" x2="65" y2="485.5" stroke="#f0f0f0" stroke-width="1"/>
<line x1="57" y1="488.5" x2="65" y2="488.5" stroke="#f0f0f0" stroke-width="1"/>
<line x1="61" y1="492.5" x2="65" y2="492.5" stroke="#f0f0f0" stroke-width="1"/>
<line x1="61" y1="496.5" x2="65" y2="496.5" stroke="#f0f0f0" stroke-width="1"/>
<line x1="61" y1="500.5" x2="65" y2="500.5" stroke="#f0f0f0" stroke-width="1"/>
<line x1="61" y1="504.5" x2="65" y2="504.5" stroke="#f0f0f0" stroke-width="1"/>
<line x1="57" y1="507.5" x2="65" y2="507.5" stroke="#f0f0f0" stroke-width="1"/>
<line x1="61" y1="511.5" x2="65" y2="511.5" stroke="#f0f0f0" stroke-width="1"/>
<line x1="61" y1="515.5" x2="65" y2="515.5" stroke="#f0f0f0" stroke-width="1"/>
<line x1="61" y1="519.5" x2="65" y2="519.5" stroke="#f0f0f0" stroke-width="1"/>
<line x1="61" y1="523.5" x2="65" y2="523.5" stroke="#f0f0f0" stroke-width="1"/>
<line x1="57" y1="526.5" x2="65" y2="526.5" stroke="#f0f0f0" stroke-width="1"/>
<line x1="61" y1="530.5" x2="65" y2="530.5" stroke="#f0f0f0" stroke-width="1"/>
<line x1="61" y1="534.5" x2="65" y2="534.5" stroke="#f0f0f0" stroke-width="1"/>
<line x1="61" y1="538.5" x2="65" y2="538.5" stroke="#f0f0f0" stroke-width="1"/>
<line x1="61" y1="542.5" x2="65" y2="542.5" stroke="#f0f0f0" stroke-width="1"/>
<line x1="57" y1="545.5" x2="65" y2="545.5" stroke="#f0f0f0" stroke-width="1"/>
<line x1="61" y1="549.5" x2="65" y2="549.5" stroke="#f0f0f0" stroke-width="1"/>
<line x1="61" y1="553.5" x2="65" y2="553.5" stroke="#f0f0f0" stroke-width="1"/>
<line x1="61" y1="557.5" x2="65" y2="557.5" stroke="#f0f0f0" stroke-width="1"/>
<line x1="61" y1="561.5" x2="65" y2="561.5" stroke="#f0f0f0" stroke-width="1"/>
<line x1="57" y1="564.5" x2="65" y2="564.5" stroke="#f0f0f0" stroke-width="1"/>
<line x1="61" y1="568.5" x2="65" y2="568.5" stroke="#f0f0f0" stroke-width="1"/>
<line x1="61" y1="572.5" x2="65" y2="572.5" stroke="#f0f0f0" stroke-width="1"/>
<line x1="61" y1="576.5" x2="65" y2="576.5" stroke="#f0f0f0" stroke-width="1"/>
<line x1="61" y1="580.5" x2="65" y2="580.5" stroke="#f0f0f0" stroke-width="1"/>
<line x1="57" y1="583.5" x2="65" y2="583.5" stroke="#f0f0f0" stroke-width="1"/>
<line x1="61" y1="587.5" x2="65" y2="587.5" stroke="#f0f0f0" stroke-width="1"/>
<line x1="61" y1="591.5" x2="65" y2="591.5" stroke="#f0f0f0" stroke-width="1"/>
<line x1="61" y1="595.5" x2="65" y2="595.5" stroke="#f0f0f0" stroke-width="1"/>
<line x1="61" y1="599.5" x2="65" y2="599.5" stroke="#f0f0f0" stroke-width="1"/>
<line x1="57" y1="602.5" x2="65" y2="602.5" stroke="#f0f0f0" stroke-width="1"/>
<line x1="61" y1="606.5" x2="65" y2="606.5" stroke="#f0f0f0" stroke-width="1"/>
<line x1="61" y1="610.5" x2="65" y2="610.5" stroke="#f0f0f0" stroke-width="1"/>
<line x1="61" y1="614.5" x2="65" y2="614.5" stroke="#f0f0f0" stroke-width="1"/>
<line x1="61" y1="618.5" x2="65" y2="618.5" stroke="#f0f0f0" stroke-width="1"/>
<line x1="57" y1="621.5" x2="65" y2="621.5" stroke="#f0f0f0" stroke-width="1"/>
<line x1="61" y1="625.5" x2="65" y2="625.5" stroke="#f0f0f0" stroke-width="1"/>
<line x1="61" y1="629.5" x2="65" y2="629.5" stroke="#f0f0f0" stroke-width="1"/>
<line x1="61" y1="633.5" x2="65" y2="633.5" stroke="#f0f0f0" stroke-width="1"/>
<line x1="61" y1="637.5" x2="65" y2="637.5" stroke="#f0f0f0" stroke-width="1"/>
<line x1="57" y1="640.5" x2="65" y2="640.5" stroke="#f0f0f0" stroke-width="1"/>
<line x1="61" y1="644.5" x2="65" y2="644.5" stroke="#f0f0f0" stroke-width="1"/>
<line x1="61" y1="648.5" x2="65" y2="648.5" stroke="#f0f0f0" stroke-width="1"/>
<line x1="61" y1="652.5" x2="65" y2="652.5" stroke="#f0f0f0" stroke-width="1"/>
<line x1="61" y1="656.5" x2="65" y2="656.5" stroke="#f0f0f0" stroke-width="1"/>
<line x1="57" y1="659.5" x2="65" y2="659.5" stroke="#f0f0f0" stroke-width="1"/>
<line x1="61" y1="663.5" x2="65" y2="663.5" stroke="#f0f0f0" stroke-width="1"/>
<line x1="61" y1="667.5" x2="65" y2="667.5" stroke="#f0f0f0" stroke-width="1"/>
<line x1="61" y1="671.5" x2="65" y2="671.5" stroke="#f0f0f0" stroke-width="1"/>
<line x1="61" y1="675.5" x2="65" y2="675.5" stroke="#f0f0f0" stroke-width="1"/>
<line x1="57" y1="678.5" x2="65" y2="678.5" stroke="#f0f0f0" stroke-width="1"/>
<line x1="61" y1="682.5" x2="65" y2="682.5" stroke="#f0f0f0" stroke-width="1"/>
<line x1="61" y1="686.5" x2="65" y2="686.5" stroke="#f0f0f0" stroke-width="1"/>
<line x1="61" y1="690.5" x2="65" y2="690.5" stroke="#f0f0f0" stroke-width="1"/>
<line x1="61" y1="694.5" x2="65" y2="694.5" stroke="#f0f0f0" stroke-width="1"/>
<line x1="57" y1="697.5" x2="65" y2="697.5" stroke="#f0f0f0" stroke-width="1"/>
<line x1="61" y1="701.5" x2="65" y2="701.5" stroke="#f0f0f0" stroke-width="1"/>
<line x1="61" y1="705.5" x2="65" y2="705.5" stroke="#f0f0f0" stroke-width="1"/>
<line x1="61" y1="709.5" x2="65" y2="709.5" stroke="#f0f0f0" stroke-width="1"/>
<line x1="61" y1="713.5" x2="65" y2="713.5" stroke="#f0f0f0" stroke-width="1"/>
<line x1="65.5" y1="387" x2="65.5" y2="716" stroke="#ffff00" stroke-width="1"/><line x1="64.5" y1="387" x2="64.5" y2="716" stroke="#f0f0f0" stroke-width="1"/>
<line x1="64" y1="715.5" x2="1237" y2="715.5" stroke="#f0f0f0" stroke-width="1"/>
<line x1="79.5" y1="716" x2="79.5" y2="719" stroke="#f0f0f0" stroke-width="1"/>
<line x1="94.5" y1="716" x2="94.5" y2="719" stroke="#f0f0f0" stroke-width="1"/>
<line x1="109.5" y1="716" x2="109.5" y2="719" stroke="#f0f0f0" stroke-width="1"/>
<line x1="124.5" y1="716" x2="124.5" y2="719" stroke="#f0f0f0" stroke-width="1"/>
<line x1="139.5" y1="716" x2="139.5" y2="721" stroke="#f0f0f0" stroke-width="1"/>
<line x1="154.5" y1="716" x2="154.5" y2="719" stroke="#f0f0f0" stroke-width="1"/>
<line x1="168.5" y1="716" x2="168.5" y2="719" stroke="#f0f0f0" stroke-width="1"/>
<line x1="183.5" y1="716" x2="183.5" y2="719" stroke="#f0f0f0" stroke-width="1"/>
<line x1="198.5" y1="716" x2="198.5" y2="719" stroke="#f0f0f0" stroke-width="1"/>
<line x1="213.5" y1="716" x2="213.5" y2="721" stroke="#f0f0f0" stroke-width="1"/>
<line x1="228.5" y1="716" x2="228.5" y2="719" stroke="#f0f0f0" stroke-width="1"/>
<line x1="243.5" y1="716" x2="243.5" y2="719" stroke="#f0f0f0" stroke-width="1"/>
<line x1="258.5" y1="716" x2="258.5" y2="719" stroke="#f0f0f0" stroke-width="1"/>
<line x1="273.5" y1="716" x2="273.5" y2="719" stroke="#f0f0f0" stroke-width="1"/>
<line x1="288.5" y1="716" x2="288.5" y2="721" stroke="#f0f0f0" stroke-width="1"/>
<line x1="303.5" y1="716" x2="303.5" y2="719" stroke="#f0f0f0" stroke-width="1"/>
<line x1="317.5" y1="716" x2="317.5" y2="719" stroke="#f0f0f0" stroke-width="1"/>
<line x1="332.5" y1="716" x2="332.5" y2="719" stroke="#f0f0f0" stroke-width="1"/>
<line x1="347.5" y1="716" x2="347.5" y2="719" stroke="#f0f0f0" stroke-width="1"/>
<line x1="362.5" y1="716" x2="362.5" y2="721" stroke="#f0f0f0" stroke-width="1"/>
<line x1="377.5" y1="716" x2="377.5" y2="719" stroke="#f0f0f0" stroke-width="1"/>
<line x1="392.5" y1="716" x2="392.5" y2="719" stroke="#f0f0f0" stroke-width="1"/>
<line x1="407.5" y1="716" x2="407.5" y2="719" stroke="#f0f0f0" stroke-width="1"/>
<line x1="422.5" y1="716" x2="422.5" y2="719" stroke="#f0f0f0" stroke-width="1"/>
<line x1="437.5" y1="716" x2="437.5" y2="721" stroke="#f0f0f0" stroke-width="1"/>
<line x1="452.5" y1="716" x2="452.5" y2="719" stroke="#f0f0f0" stroke-width="1"/>
<line x1="466.5" y1="716" x2="466.5" y2="719" stroke="#f0f0f0" stroke-width="1"/>
<line x1="481.5" y1="716" x2="481.5" y2="719" stroke="#f0f0f0" stroke-width="1"/>
<line x1="496.5" y1="716" x2="496.5" y2="719" stroke="#f0f0f0" stroke-width="1"/>
<line x1="511.5" y1="716" x2="511.5" y2="721" stroke="#f0f0f0" stroke-width="1"/>
<line x1="526.5" y1="716" x2="526.5" y2="719" stroke="#f0f0f0" stroke-width="1"/>
<line x1="541.5" y1="716" x2="541.5" y2="719" stroke="#f0f0f0" stroke-width="1"/>
<line x1="556.5" y1="716" x2="556.5" y2="719" stroke="#f0f0f0" stroke-width="1"/>
<line x1="571.5" y1="716" x2="571.5" y2="719" stroke="#f0f0f0" stroke-width="1"/>
<line x1="586.5" y1="716" x2="586.5" y2="721" stroke="#f0f0f0" stroke-width="1"/>
<line x1="601.5" y1="716" x2="601.5" y2="719" stroke="#f0f0f0" stroke-width="1"/>
<line x1="615.5" y1="716" x2="615.5" y2="719" stroke="#f0f0f0" stroke-width="1"/>
<line x1="630.5" y1="716" x2="630.5" y2="719" stroke="#f0f0f0" stroke-width="1"/>
<line x1="645.5" y1="716" x2="645.5" y2="719" stroke="#f0f0f0" stroke-width="1"/>
<line x1="660.5" y1="716" x2="660.5" y2="721" stroke="#f0f0f0" stroke-width="1"/>
<line x1="675.5" y1="716" x2="675.5" y2="719" stroke="#f0f0f0" stroke-width="1"/>
<line x1="690.5" y1="716" x2="690.5" y2="719" stroke="#f0f0f0" stroke-width="1"/>
<line x1="705.5" y1="716" x2="705.5" y2="719" stroke="#f0f0f0" stroke-width="1"/>
<line x1="720.5" y1="716" x2="720.5" y2="719" stroke="#f0f0f0" stroke-width="1"/>
<line x1="735.5" y1="716" x2="735.5" y2="721" stroke="#f0f0f0" stroke-width="1"/>
<line x1="750.5" y1="716" x2="750.5" y2="719" stroke="#f0f0f0" stroke-width="1"/>
<line x1="764.5" y1="716" x2="764.5" y2="719" stroke="#f0f0f0" stroke-width="1"/>
<line x1="779.5" y1="716" x2="779.5" y2="719" stroke="#f0f0f0" stroke-width="1"/>
<line x1="794.5" y1="716" x2="794.5" y2="719" stroke="#f0f0f0" stroke-width="1"/>
<line x1="809.5" y1="716" x2="809.5" y2="721" stroke="#f0f0f0" stroke-width="1"/>
<line x1="824.5" y1="716" x2="824.5" y2="719" stroke="#f0f0f0" stroke-width="1"/>
<line x1="839.5" y1="716" x2="839.5" y2="719" stroke="#f0f0f0" stroke-width="1"/>
<line x1="854.5" y1="716" x2="854.5" y2="719" stroke="#f0f0f0" stroke-width="1"/>
<line x1="869.5" y1="716" x2="869.5" y2="719" stroke="#f0f0f0" stroke-width="1"/>
<line x1="884.5" y1="716" x2="884.5" y2="721" stroke="#f0f0f0" stroke-width="1"/>
<line x1="899.5" y1="716" x2="899.5" y2="719" stroke="#f0f0f0" stroke-width="1"/>
<line x1="913.5" y1="716" x2="913.5" y2="719" stroke="#f0f0f0" stroke-width="1"/>
<line x1="928.5" y1="716" x2="928.5" y2="719" stroke="#f0f0f0" stroke-width="1"/>
<line x1="943.5" y1="716" x2="943.5" y2="719" stroke="#f0f0f0" stroke-width="1"/>
<line x1="958.5" y1="716" x2="958.5" y2="721" stroke="#f0f0f0" stroke-width="1"/>
<line x1="973.5" y1="716" x2="973.5" y2="719" stroke="#f0f0f0" stroke-width="1"/>
<line x1="988.5" y1="716" x2="988.5" y2="719" stroke="#f0f0f0" stroke-width="1"/>
<line x1="1003.5" y1="716" x2="1003.5" y2="719" stroke="#f0f0f0" stroke-width="1"/>
<line x1="1018.5" y1="716" x2="1018.5" y2="719" stroke="#f0f0f0" stroke-width="1"/>
<line x1="1033.5" y1="716" x2="1033.5" y2="721" stroke="#f0f0f0" stroke-width="1"/>
<line x1="1048.5" y1="716" x2="1048.5" y2="719" stroke="#f0f0f0" stroke-width="1"/>
<line x1="1062.5" y1="716" x2="1062.5" y2="719" stroke="#f0f0f0" stroke-width="1"/>
<line x1="1077.5" y1="716" x2="1077.5" y2="719" stroke="#f0f0f0" stroke-width="1"/>
<line x1="1092.5" y1="716" x2="1092.5" y2="719" stroke="#f0f0f0" stroke-width="1"/>
<line x1="1107.5" y1="716" x2="1107.5" y2="721" stroke="#f0f0f0" stroke-width="1"/>
<line x1="1122.5" y1="716" x2="1122.5" y2="719" stroke="#f0f0f0" stroke-width="1"/>
<line x1="1137.5" y1="716" x2="1137.5" y2="719" stroke="#f0f0f0" stroke-width="1"/>
<line x1="1152.5" y1="716" x2="1152.5" y2="719" stroke="#f0f0f0" stroke-width="1"/>
<line x1="1167.5" y1="716" x2="1167.5" y2="719" stroke="#f0f0f0" stroke-width="1"/>
<line x1="1182.5" y1="716" x2="1182.5" y2="721" stroke="#f0f0f0" stroke-width="1"/>
<line x1="1196.5" y1="716" x2="1196.5" y2="719" stroke="#f0f0f0" stroke-width="1"/>
<line x1="1211.5" y1="716" x2="1211.5" y2="719" stroke="#f0f0f0" stroke-width="1"/>
<line x1="1226.5" y1="716" x2="1226.5" y2="719" stroke="#f0f0f0" stroke-width="1"/>
<line x1="1236.5" y1="370" x2="1236.5" y2="715" stroke="#f0f0f0" stroke-width="1"/><line x1="1235.5" y1="370" x2="1235.5" y2="715" stroke="#ff1010" stroke-width="1" stroke-dasharray="3 2"/>
<path d="M71.0 603.6 L74.2 602.3 L78.9 603.3 L82.9 600.8 L87.6 604.4 L93.1 604.4 L93.9 606.4 L97.1 602.3 L101.0 603.9 L108.9 604.4 L112.1 601.2 L114.4 605.2 L116.8 602.8 L120.7 606.4 L123.9 602.8 L127.8 602.3 L132.6 606.4 L136.5 611.2 L140.8 599.7 L145.2 604.1 L149.1 605.2 L153.1 606.8 L156.2 615.4 L159.4 617.0 L163.3 615.4 L168.0 620.2 L172.8 619.7 L178.0 625.4 L180.7 623.3 L185.4 623.3 L190.1 614.6 L194.9 618.6 L195.0 617.5 L198.2 608.5 L201.5 611.4 L205.8 603.8 L210.2 603.8 L212.3 605.2 L215.2 600.4 L221.0 598.7 L223.2 599.4 L225.3 596.5 L229.7 596.5 L231.1 597.3 L234.0 595.1 L238.4 594.7 L242.0 596.5 L245.6 592.3 L247.7 594.4 L251.4 600.1 L253.5 598.4 L255.7 599.4 L258.6 603.3 L262.9 602.6 L266.5 606.2 L269.4 606.6 L274.5 611.4 L280.3 616.0 L283.2 616.3 L288.9 621.1 L290.4 621.1 L293.3 618.6 L296.9 618.2 L301.9 616.3 L305.5 616.0 L307.0 617.2 L309.9 608.5 L312.8 609.1 L317.8 606.2 L320.7 600.4 L322.9 601.6 L325.8 599.4 L329.4 601.6 L330.0 601.6 L332.2 598.4 L335.8 598.4 L337.9 593.6 L341.6 593.2 L344.5 589.3 L348.1 590.8 L351.0 588.3 L354.6 587.9 L356.7 586.4 L359.6 585.7 L362.5 581.6 L366.1 580.6 L367.9 578.5 L372.6 574.4 L374.8 575.6 L377.7 574.1 L380.6 569.8 L384.2 571.0 L387.8 567.2 L390.7 567.6 L392.1 568.4 L395.8 568.4 L396.5 569.4 L402.3 570.1 L406.6 567.2 L409.5 567.2 L410.9 566.5 L416.7 566.2 L418.2 565.5 L421.0 570.1 L423.2 570.5 L426.1 575.9 L429.7 577.0 L432.6 576.3 L435.5 578.5 L438.4 578.8 L445.6 585.0 L454.3 592.6 L457.2 593.2 L460.8 590.8 L464.4 586.4 L465.0 586.4 L467.9 586.8 L470.1 588.3 L472.9 587.1 L476.6 591.2 L479.5 592.2 L483.8 592.2 L489.6 581.6 L492.5 580.6 L499.0 574.9 L501.1 569.8 L505.5 567.6 L507.6 564.3 L509.8 563.3 L511.5 560.4 L514.1 562.9 L517.0 560.1 L518.8 560.4 L522.1 563.7 L525.0 565.5 L527.1 562.6 L528.6 562.9 L535.8 570.5 L537.3 570.5 L540.1 568.1 L542.3 567.2 L543.8 568.1 L545.2 567.2 L546.6 569.1 L550.3 583.5 L552.4 588.6 L554.6 575.6 L556.3 574.9 L558.9 589.3 L560.4 587.4 L562.5 588.6 L566.2 600.1 L570.5 603.8 L572.7 603.0 L577.0 608.5 L579.9 604.5 L581.3 604.5 L583.5 609.1 L587.8 609.5 L589.3 615.3 L592.2 603.0 L593.6 604.5 L595.8 610.3 L600.0 605.2 L602.9 606.6 L605.1 612.0 L607.9 605.6 L609.4 607.4 L611.6 612.4 L613.7 609.5 L615.9 609.5 L617.3 611.7 L619.5 600.4 L621.4 601.6 L623.1 608.1 L625.3 604.5 L628.9 606.2 L630.3 608.1 L632.5 605.2 L634.0 605.9 L636.1 614.3 L637.6 611.0 L639.7 603.0 L641.2 604.2 L644.1 608.8 L646.2 606.6 L649.9 607.1 L652.0 610.3 L654.2 610.5 L657.1 612.4 L659.2 610.5 L663.6 610.3 L668.6 603.5 L672.3 606.6 L674.4 605.2 L675.9 607.4 L678.0 607.7 L682.4 608.5 L684.5 608.1 L687.4 610.3 L690.3 608.5 L693.9 611.4 L696.1 610.5 L698.3 608.8 L700.4 609.1 L701.9 612.4 L704.0 604.2 L705.5 604.8 L708.4 608.5 L712.0 607.1 L715.6 609.5 L719.2 605.2 L724.3 605.6 L727.2 602.3 L728.6 603.0 L731.5 610.5 L734.4 610.3 L735.0 611.0 L737.9 614.6 L741.5 616.8 L743.7 609.5 L745.1 609.5 L749.5 618.2 L753.1 616.3 L755.2 616.8 L758.4 620.1 L762.5 611.7 L765.3 605.6 L769.7 613.2 L773.3 607.1 L775.5 607.1 L778.4 609.2 L781.2 592.2 L782.7 592.2 L785.6 599.4 L788.5 591.8 L790.6 591.2 L793.5 591.2 L797.1 584.2 L799.3 584.2 L801.5 586.4 L805.8 582.5 L810.9 577.7 L813.8 578.2 L818.1 574.1 L821.7 573.4 L823.9 570.5 L826.0 570.5 L827.5 572.4 L829.7 570.5 L834.7 570.5 L837.6 571.5 L841.9 570.1 L844.8 568.4 L847.0 569.5 L852.1 566.6 L854.9 567.2 L862.2 567.6 L865.1 566.5 L870.0 566.6 L874.3 562.6 L877.9 563.7 L881.6 559.7 L885.9 560.0 L887.3 560.4 L890.2 559.4 L891.7 559.7 L893.8 561.4 L895.3 560.4 L898.2 560.4 L902.5 556.1 L906.1 557.5 L908.3 553.6 L911.9 553.2 L914.8 548.8 L917.7 546.7 L921.3 543.1 L924.9 539.0 L929.2 537.6 L932.9 537.6 L935.0 538.6 L939.4 537.6 L942.3 538.3 L945.9 537.6 L948.8 538.3 L952.4 538.7 L956.7 541.6 L960.3 543.4 L965.4 544.2 L969.7 544.5 L973.3 546.4 L976.2 546.0 L978.4 546.0 L981.3 547.4 L985.6 543.5 L987.1 543.5 L989.9 546.4 L993.6 545.5 L997.2 551.7 L999.3 552.5 L1002.7 557.5 L1005.0 555.3 L1008.6 558.2 L1011.5 558.5 L1013.7 560.4 L1018.0 560.4 L1019.5 558.5 L1022.3 561.8 L1025.2 557.5 L1028.8 560.0 L1031.0 559.7 L1035.3 560.8 L1036.8 562.3 L1039.7 562.9 L1043.3 567.2 L1046.9 574.9 L1051.5 582.8 L1058.5 574.4 L1064.2 569.1 L1067.1 565.2 L1070.0 567.2 L1073.6 567.6 L1077.3 574.9 L1081.3 580.6 L1085.2 575.6 L1087.4 576.3 L1093.2 567.6 L1096.0 568.4 L1098.9 568.4 L1101.1 565.5 L1104.7 565.8 L1106.9 566.6 L1109.0 563.3 L1111.2 563.7 L1114.8 568.6 L1119.2 564.7 L1122.1 564.3 L1126.4 563.3 L1127.8 565.2 L1129.0 570.5 L1131.4 558.5 L1133.3 558.5 L1135.8 569.8 L1138.7 567.6 L1140.0 568.4 L1142.2 575.6 L1143.6 577.1 L1145.8 577.8 L1149.4 583.6 L1154.5 586.5 L1156.6 588.6 L1159.5 593.0 L1162.4 593.7 L1166.8 599.5 L1170.4 602.4 L1174.0 596.2 L1175.4 596.6 L1177.6 600.2 L1180.5 600.5 L1184.1 604.5 L1187.7 606.7 L1192.1 603.1 L1194.2 603.4 L1197.9 605.3 L1200.7 603.4 L1203.6 605.7 L1206.5 606.3 L1210.9 604.3 L1215.2 604.8 L1216.7 606.7 L1222.4 605.3 L1225.3 603.1 L1228.2 604.5 L1233.3 604.5 L1235.5 607.4" fill="none" stroke="#f0a020" stroke-width="1.1" stroke-linejoin="round"/>
</svg>
<div class="t ylab" style="left:14px;top:386px">5.0</div>
<div class="t ylab" style="left:14px;top:404px">4.5</div>
<div class="t ylab" style="left:14px;top:424px">4.0</div>
<div class="t ylab" style="left:14px;top:442px">3.5</div>
<div class="t ylab" style="left:14px;top:462px">3.0</div>
<div class="t ylab" style="left:14px;top:480px">2.5</div>
<div class="t ylab" style="left:14px;top:500px">2.0</div>
<div class="t ylab" style="left:14px;top:518px">1.5</div>
<div class="t ylab" style="left:14px;top:538px">1.0</div>
<div class="t ylab" style="left:14px;top:556px">0.5</div>
<div class="t ylab" style="left:14px;top:576px">0.0</div>
<div class="t ylab" style="left:14px;top:594px">-0.5</div>
<div class="t ylab" style="left:14px;top:614px">-1.0</div>
<div class="t ylab" style="left:14px;top:632px">-1.5</div>
<div class="t ylab" style="left:14px;top:652px">-2.0</div>
<div class="t ylab" style="left:14px;top:670px">-2.5</div>
<div class="t ylab" style="left:14px;top:690px">-3.0</div>
<div class="t xlab" style="left:109px;top:720px">500</div>
<div class="t xlab" style="left:184px;top:720px">1000</div>
<div class="t xlab" style="left:258px;top:720px">1500</div>
<div class="t xlab" style="left:333px;top:720px">2000</div>
<div class="t xlab" style="left:407px;top:720px">2500</div>
<div class="t xlab" style="left:482px;top:720px">3000</div>
<div class="t xlab" style="left:556px;top:720px">3500</div>
<div class="t xlab" style="left:631px;top:720px">4000</div>
<div class="t xlab" style="left:705px;top:720px">4500</div>
<div class="t xlab" style="left:780px;top:720px">5000</div>
<div class="t xlab" style="left:854px;top:720px">5500</div>
<div class="t xlab" style="left:929px;top:720px">6000</div>
<div class="t xlab" style="left:1003px;top:720px">6500</div>
<div class="t xlab" style="left:1078px;top:720px">7000</div>
<div class="t xlab" style="left:1152px;top:720px">7500</div>
<div class="t" style="left:40px;top:717px;width:21px;height:13px;background:#f0f0f0;color:#000;font-size:11px;line-height:13px;text-align:center">foot</div>
<svg class="a" style="left:58px;top:603px" width="16" height="7" viewBox="0 0 16 7"><path d="M0.5 3.5 L2.5 1.5 H13 L15 3.5 L13 5.5 H2.5 Z" fill="#ffff10"/></svg>
<div class="a" style="left:66px;top:387px;width:213px;height:15px;background:#1c1c1c"></div>
<div class="a" style="left:67px;top:393px;width:5px;height:5px;background:#c8c8c8"></div>
<div class="t" style="left:75px;top:386px;font-size:12.6px;color:#f0a020">Gyro Pitch Angle [°]</div>
<div class="t" style="left:209px;top:386px;font-size:12.3px;color:#f0a020">-0.60465432</div>
<div class="a" style="left:1241px;top:388px;width:8px;height:328px;border-radius:4px;background:linear-gradient(90deg,#707070,#e0e0e0 45%,#909090)"></div>  <!-- right toolbar -->
  <div class="a" style="left:1323px;top:125px;width:24px;height:612px;background:linear-gradient(90deg,#d6d6d6 0,#c4c4c4 8%,#b8b8b8 50%,#a8a8a8 100%)"></div>
  <svg class="a" style="left:1322px;top:124px" width="25" height="360" viewBox="1322 124 25 360">
    <!-- properties -->
    <rect x="1327" y="132" width="12" height="11" fill="#f4f8ff" stroke="#5070b0" stroke-width="0.8"/>
    <path d="M1329 137.5h8" stroke="#3050d0" stroke-width="1"/><path d="M1329 140h8" stroke="#d03030" stroke-width="1"/>
    <path d="M1328 133 l5 -5 l5 1 l3 2 l-3 2 z" fill="#e8c050" stroke="#a08020" stroke-width="0.5"/>
    <path d="M1338 129 l3 -1 v5z" fill="#40b040"/>
    <!-- window -->
    <rect x="1327" y="152.5" width="13" height="11" fill="#6890e0" stroke="#304890" stroke-width="0.8"/>
    <path d="M1329 156h9M1329 158.5h9M1329 161h6" stroke="#e0e8ff" stroke-width="1"/>
    <!-- delta -->
    <text x="1329" y="193" font-family="Liberation Serif" font-size="14" font-weight="bold" fill="#000">δ</text>
    <!-- || -->
    <path d="M1332.5 203v14" stroke="#207030" stroke-width="1.5"/><path d="M1336.5 203v14" stroke="#3060d0" stroke-width="1.5"/>
    <!-- zoom box -->
    <circle cx="1332" cy="240" r="5" fill="#f0f8ff" stroke="#909090" stroke-width="1.2"/>
    <rect x="1329.5" y="237.5" width="5" height="5" fill="#e0f0ff" stroke="#000" stroke-width="1.2"/>
    <path d="M1336 244 l4 4" stroke="#1040d0" stroke-width="2.4"/>
    <!-- zoom gray -->
    <circle cx="1332" cy="261" r="5.5" fill="#e8e8e8" stroke="#f4f4f4" stroke-width="1.5"/>
    <path d="M1332 255v12" stroke="#c0c0c0" stroke-width="1"/>
    <path d="M1336 266 l4 4" stroke="#e0e0e0" stroke-width="2.4"/>
    <!-- zoom + horiz -->
    <g id="z1">
    <circle cx="1332" cy="291" r="5" fill="#e8f0ff" stroke="#909090" stroke-width="1"/>
    <path d="M1329.5 291h5M1332 288.5v5" stroke="#2040a0" stroke-width="1.4"/>
    <path d="M1336 295 l3.5 3.5" stroke="#d0a040" stroke-width="2.4"/>
    <path d="M1326 299h7" stroke="#000" stroke-width="0.9"/>
    </g>
    <circle cx="1332" cy="313" r="5" fill="#e8f0ff" stroke="#909090" stroke-width="1"/>
    <path d="M1329.5 313h5" stroke="#2040a0" stroke-width="1.4"/>
    <path d="M1336 317 l3.5 3.5" stroke="#d0a040" stroke-width="2.4"/>
    <path d="M1326 321h7" stroke="#000" stroke-width="0.9"/>
    <circle cx="1332" cy="335" r="5" fill="#ffff20" stroke="#a0a0a0" stroke-width="1"/>
    <path d="M1336 339 l3.5 3.5" stroke="#d0a040" stroke-width="2.4"/>
    <path d="M1326 343h7" stroke="#000" stroke-width="0.9"/>
    <circle cx="1332" cy="357" r="5" fill="#f4f4f4" stroke="#a0a0a0" stroke-width="1"/>
    <rect x="1329" y="355" width="6" height="4" fill="#e00000"/>
    <path d="M1336 361 l3.5 3.5" stroke="#d0a040" stroke-width="2.4"/>
    <path d="M1326 365h7" stroke="#000" stroke-width="0.9"/>
    <!-- vertical zooms -->
    <circle cx="1331" cy="386" r="5" fill="#e8f0ff" stroke="#909090" stroke-width="1"/>
    <path d="M1328.5 386h5M1331 383.5v5" stroke="#2040a0" stroke-width="1.4"/>
    <path d="M1335 390 l3.5 3.5" stroke="#d0a040" stroke-width="2.4"/>
    <path d="M1339 381v8" stroke="#000" stroke-width="0.9"/>
    <circle cx="1331" cy="408" r="5" fill="#e8f0ff" stroke="#909090" stroke-width="1"/>
    <path d="M1328.5 408h5" stroke="#2040a0" stroke-width="1.4"/>
    <path d="M1335 412 l3.5 3.5" stroke="#d0a040" stroke-width="2.4"/>
    <path d="M1339 403v8" stroke="#000" stroke-width="0.9"/>
    <circle cx="1331" cy="430" r="5" fill="#ffff20" stroke="#a0a0a0" stroke-width="1"/>
    <path d="M1335 434 l3.5 3.5" stroke="#d0a040" stroke-width="2.4"/>
    <path d="M1339 425v8" stroke="#000" stroke-width="0.9"/>
    <!-- ruler -->
    <rect x="1326" y="454" width="15" height="3" fill="#e8f0ff" stroke="#4060b0" stroke-width="0.8"/>
    <rect x="1326" y="467" width="15" height="3" fill="#e8f0ff" stroke="#4060b0" stroke-width="0.8"/>
    <path d="M1327 462h13M1327 462l2.5 -2M1327 462l2.5 2M1340 462l-2.5 -2M1340 462l-2.5 2" stroke="#000" stroke-width="0.9" fill="none"/>
  </svg>
  <!-- status bar -->
  <div class="a" style="left:0;top:737px;width:1347px;height:24px;background:#efefef"></div>
  <div class="a" style="left:0;top:760px;width:1347px;height:1px;background:#5a5a5a"></div>
  <div class="a" style="left:295px;top:739px;width:1px;height:19px;background:#c8c8c8"></div>
  <div class="a" style="left:414px;top:739px;width:1px;height:19px;background:#c8c8c8"></div>
  <div class="a" style="left:968px;top:739px;width:1px;height:19px;background:#c8c8c8"></div>
  <div class="a" style="left:1176px;top:739px;width:1px;height:19px;background:#c8c8c8"></div>
  <div class="t" style="left:433px;top:743px;font-size:12px;font-weight:bold;color:#000">Time</div>
  <div class="t" style="left:467px;top:743px;font-size:12px;font-weight:bold;color:#000">0.000000 [s]</div>
  <div class="a" style="left:560px;top:745px;width:8px;height:8px;background:#e00000;border:1px solid #600"></div>
  <div class="t" style="left:571px;top:743px;font-size:12px;font-weight:bold;color:#000">Distance</div>
  <div class="t" style="left:629px;top:743px;font-size:12px;font-weight:bold;color:#000">0 [ft]</div>

  <svg class="a" style="left:1335px;top:748px" width="11" height="11" viewBox="0 0 11 11">
    <g fill="#b0b0b0"><rect x="8" y="1" width="2" height="2"/><rect x="5" y="4" width="2" height="2"/><rect x="8" y="4" width="2" height="2"/><rect x="2" y="7" width="2" height="2"/><rect x="5" y="7" width="2" height="2"/><rect x="8" y="7" width="2" height="2"/></g>
  </svg>

</div>
<div class="a" style="left:0;top:0;width:1349px;height:1px;background:#8e5aa0"></div>
</body></html>
